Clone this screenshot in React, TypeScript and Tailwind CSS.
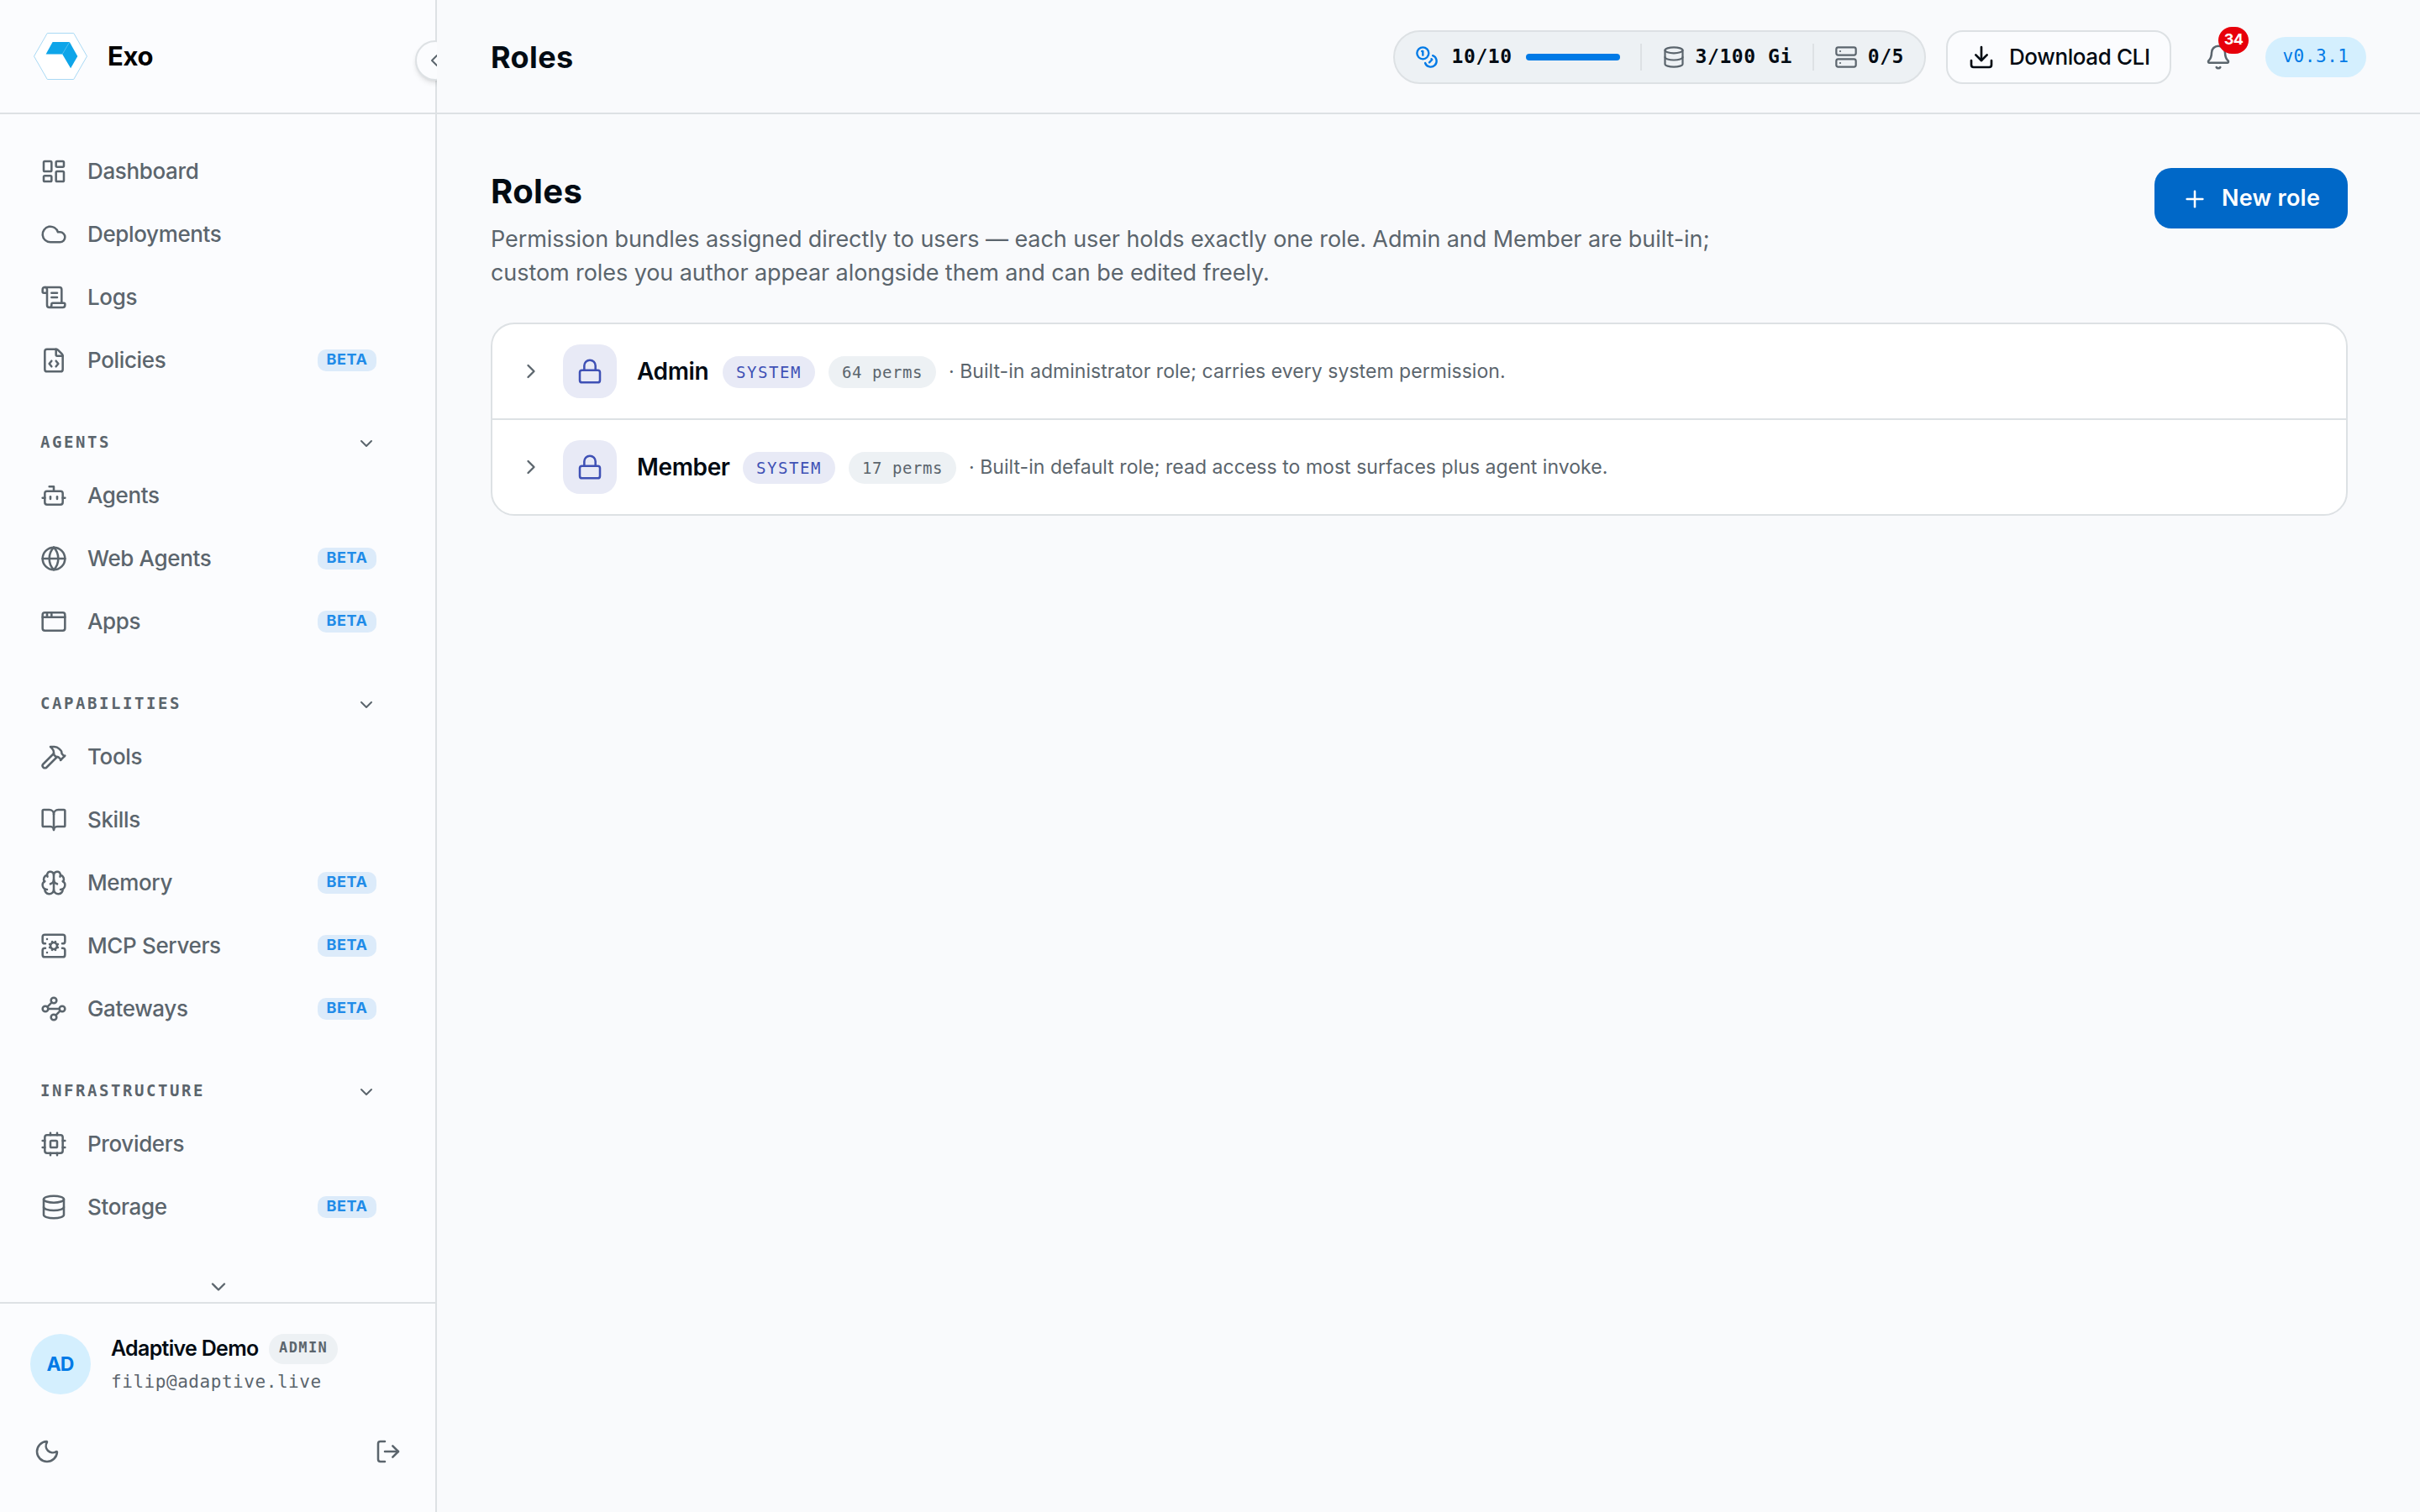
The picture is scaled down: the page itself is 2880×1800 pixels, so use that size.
import { useState } from "react";
import {
  Bell,
  Bot,
  BookOpen,
  Brain,
  ChevronDown,
  ChevronLeft,
  ChevronRight,
  Cloud,
  Coins,
  Database,
  Download,
  FileCode,
  Globe,
  Hammer,
  AppWindow,
  LayoutDashboard,
  Lock,
  LogOut,
  Moon,
  Plus,
  ScrollText,
  Server,
  ServerCog,
  Waypoints,
} from "lucide-react";

type IconProps = { className?: string; strokeWidth?: number };

// Chip with two pins per side
const Chip = ({ className, strokeWidth = 2 }: IconProps) => (
  <svg
    className={className}
    viewBox="0 0 24 24"
    fill="none"
    stroke="currentColor"
    strokeWidth={strokeWidth}
    strokeLinecap="round"
    strokeLinejoin="round"
  >
    <rect x="4" y="4" width="16" height="16" rx="2" />
    <rect x="9" y="9" width="6" height="6" rx="1" />
    <path d="M15 2v2M15 20v2M2 15h2M2 9h2M20 15h2M20 9h2M9 2v2M9 20v2" />
  </svg>
);

const navGroups = [
  {
    label: "",
    items: [
      { name: "Dashboard", icon: LayoutDashboard },
      { name: "Deployments", icon: Cloud },
      { name: "Logs", icon: ScrollText },
      { name: "Policies", icon: FileCode, beta: true },
    ],
  },
  {
    label: "Agents",
    items: [
      { name: "Agents", icon: Bot },
      { name: "Web Agents", icon: Globe, beta: true },
      { name: "Apps", icon: AppWindow, beta: true },
    ],
  },
  {
    label: "Capabilities",
    items: [
      { name: "Tools", icon: Hammer },
      { name: "Skills", icon: BookOpen },
      { name: "Memory", icon: Brain, beta: true },
      { name: "MCP Servers", icon: ServerCog, beta: true },
      { name: "Gateways", icon: Waypoints, beta: true },
    ],
  },
  {
    label: "Infrastructure",
    items: [
      { name: "Providers", icon: Chip },
      { name: "Storage", icon: Database, beta: true },
    ],
  },
];

const roles = [
  {
    name: "Admin",
    perms: 64,
    description: "Built-in administrator role; carries every system permission.",
    nameWidth: "w-[86px]",
  },
  {
    name: "Member",
    perms: 17,
    description:
      "Built-in default role; read access to most surfaces plus agent invoke.",
    nameWidth: "w-[110px]",
  },
];

const Logo = () => (
  <svg className="h-14 w-16" viewBox="0 0 64 56" fill="none">
    <path
      d="M16.3 0.5h31.4L63.5 28 47.7 55.5H16.3L0.5 28z"
      fill="#fff"
      stroke="#a9d9f4"
    />
    <path d="M22.6 11H42.8L34.2 25.4H14.6z" fill="#0ea5e9" />
    <path d="M42.8 11l9.5 17-8.2 14.3-9.9-16.9z" fill="#0ea5e9" />
    <path d="M42.8 11l-8.6 14.4" stroke="#4dbdf0" strokeWidth="0.8" />
  </svg>
);

const Sidebar = () => {
  const [collapsed, setCollapsed] = useState<Record<string, boolean>>({});

  const toggleGroup = (label: string) => {
    setCollapsed((prev) => ({ ...prev, [label]: !prev[label] }));
  };

  return (
    <aside className="relative flex w-[520px] shrink-0 flex-col border-r-2 border-[#dde1e4] bg-[#fbfcfe]">
      <div className="flex h-[136px] shrink-0 items-center gap-6 border-b-2 border-[#dde1e4] pl-10">
        <Logo />
        <span className="text-[31px] font-bold tracking-[-0.3px] text-black">
          Exo
        </span>
      </div>

      {/* Collapse handle */}
      <button className="absolute top-12 -right-6 flex h-12 w-12 items-center justify-center rounded-full border-2 border-[#dde1e4] bg-[#fbfcfe] pr-[2px] shadow-md">
        <ChevronLeft className="h-6 w-6 shrink-0" strokeWidth={2} />
      </button>

      <nav className="flex min-h-0 flex-1 flex-col overflow-hidden px-12 pt-[30px]">
        {navGroups.map((group) => (
          <div key={group.label} className="flex shrink-0 flex-col">
            {group.label && (
              <button
                onClick={() => toggleGroup(group.label)}
                className="flex h-[86px] w-[400px] items-center justify-between pt-[38px]"
              >
                <span className="pb-[3px] font-['DejaVu_Sans_Mono',monospace] text-[19px] font-bold tracking-[2.56px] uppercase">
                  {group.label}
                </span>
                <ChevronDown className="h-6 w-6" />
              </button>
            )}
            {!collapsed[group.label] &&
              group.items.map((item) => (
                <a
                  key={item.name}
                  className="flex h-[75px] w-[400px] items-center gap-6"
                >
                  <item.icon className="h-8 w-8 shrink-0" strokeWidth={1.9} />
                  <span className="flex-1 text-[26px] font-medium tracking-[-0.36px]">
                    {item.name}
                  </span>
                  {item.beta && (
                    <span className="flex h-[26px] w-[70px] items-center justify-center rounded-[10px] bg-[#dcebfa] pb-[2px] text-[18px] font-bold tracking-[0.6px] text-[#208be8]">
                      BETA
                    </span>
                  )}
                </a>
              ))}
          </div>
        ))}
      </nav>

      <div className="flex h-8 shrink-0 justify-center pl-[2px]">
        <ChevronDown className="h-7 w-7" />
      </div>

      {/* Account */}
      <div className="flex h-[250px] shrink-0 flex-col border-t-2 border-[#dde1e4] pt-9">
        <div className="flex items-center gap-6 pl-9">
          <div className="flex h-[72px] w-[72px] items-center justify-center rounded-full bg-[#d4effe] pr-px text-[23px] font-bold tracking-[-1px] text-[#007ae6]">
            AD
          </div>
          <div className="flex flex-col">
            <div className="flex h-9 items-center gap-[14px]">
              <span className="w-[174px] text-[25px] font-semibold tracking-[-0.7px] whitespace-nowrap text-[#020b13]">
                Adaptive Demo
              </span>
              <span className="flex h-9 items-center rounded-full bg-[#edf1f4] px-3 pb-[3px] font-['DejaVu_Sans_Mono',monospace] text-[17px] font-bold tracking-[1.4px]">
                ADMIN
              </span>
            </div>
            <span className="h-9 font-['DejaVu_Sans_Mono',monospace] text-[21px] leading-[43px] tracking-[0.55px]">
              filip@adaptive.live
            </span>
          </div>
        </div>
        <div className="flex items-center justify-between pt-[52px] pr-10 pl-10">
          <Moon className="h-8 w-8" strokeWidth={1.9} />
          <LogOut className="h-8 w-8" strokeWidth={1.9} />
        </div>
      </div>
    </aside>
  );
};

const Topbar = () => (
  <header className="flex h-[136px] shrink-0 items-center justify-between border-b-2 border-[#dde1e4] px-16 pt-px">
    <h1 className="text-[36px] font-bold tracking-[0.4px] text-[#020b13]">
      Roles
    </h1>

    <div className="flex items-center">
      <div className="flex h-16 items-center rounded-full border-2 border-[#dde1e4] bg-[#edf1f4] px-6 font-['DejaVu_Sans_Mono',monospace] text-[23px] font-bold tracking-[0.55px] text-[#020b13]">
        <Coins className="mr-4 h-7 w-7 text-[#007ae6]" />
        <span>10/10</span>
        <div className="ml-4 h-2 w-28 rounded-full bg-[#007ae6]" />
        <div className="mx-6 h-8 w-[2px] bg-[#dde1e4]" />
        <Database className="mr-3 h-7 w-7 text-[#5b656d]" strokeWidth={1.9} />
        <span>3/100 Gi</span>
        <div className="mx-6 h-8 w-[2px] bg-[#dde1e4]" />
        <Server className="mr-3 h-7 w-7 text-[#5b656d]" strokeWidth={1.9} />
        <span>0/5</span>
      </div>

      <button className="ml-6 flex h-16 w-[268px] items-center gap-[17px] rounded-[20px] border-2 border-[#dde1e4] bg-[#fbfcfe] px-6 text-[26px] font-medium tracking-[-0.4px] whitespace-nowrap text-[#020b13]">
        <Download className="h-8 w-8 shrink-0" />
        Download CLI
      </button>

      <button className="relative mx-10 h-8 w-8">
        <Bell className="h-8 w-8" strokeWidth={1.9} />
        <span className="absolute -top-5 left-4 flex h-8 w-9 items-center justify-center rounded-full bg-[#e7000b] pb-[3px] text-[18px] font-bold tracking-[-0.6px] text-white">
          34
        </span>
      </button>

      <span className="flex h-12 w-[120px] items-center justify-center rounded-full bg-[#d4effe] font-['DejaVu_Sans_Mono',monospace] text-[21px] tracking-[0.55px] text-[#007ae6]">
        v0.3.1
      </span>
    </div>
  </header>
);

export default function App() {
  return (
    <div className="flex h-[1800px] w-[2880px] overflow-hidden bg-[#f9fafc] font-['Inter',sans-serif] text-[#5b656d]">
      <Sidebar />

      <div className="relative z-10 flex min-w-0 flex-1 flex-col bg-[#f9fafc]">
        <Topbar />

        <main className="flex-1 pt-16 pr-[86px] pl-16">
          <div className="flex items-start justify-between">
            <div>
              <h2 className="text-[40px] leading-[56px] font-bold tracking-[0.4px] text-[#020b13]">
                Roles
              </h2>
              <p className="mt-[9px] mb-[-1px] w-[1460px] text-[27px] leading-[40px] tracking-[-0.08px] whitespace-nowrap">
                Permission bundles assigned directly to users — each user holds
                exactly one role. Admin and Member are built-in;
                <br />
                custom roles you author appear alongside them and can be edited
                freely.
              </p>
            </div>
            <button className="flex h-[72px] w-[230px] items-center gap-4 rounded-[20px] bg-[#0068c8] px-8 pt-px text-[27px] font-semibold tracking-[0.25px] whitespace-nowrap text-white">
              <Plus className="h-8 w-8 shrink-0" strokeWidth={1.9} />
              New role
            </button>
          </div>

          <div className="mt-10 overflow-hidden rounded-[28px] border-2 border-[#dde1e4] bg-white">
            {roles.map((role) => (
              <div
                key={role.name}
                className="flex h-[114px] items-center border-b-2 border-[#dde1e4] pl-8 last:h-28 last:border-b-0"
              >
                <ChevronRight className="h-7 w-7" />
                <div className="mx-6 flex h-16 w-16 items-center justify-center rounded-[20px] bg-[#e8eaf6]">
                  <Lock className="h-8 w-8 text-[#3f51b5]" strokeWidth={1.9} />
                </div>
                <span
                  className={`${role.nameWidth} text-[28px] font-semibold tracking-[-0.35px] whitespace-nowrap text-[#020b13]`}
                >
                  {role.name}
                </span>
                <span className="mt-[2px] ml-4 flex h-[38px] items-center rounded-full bg-[#e8eaf6] px-4 font-['DejaVu_Sans_Mono',monospace] text-[19px] tracking-[1.56px] text-[#3f51b5]">
                  SYSTEM
                </span>
                <span className="mt-[2px] ml-4 flex h-[38px] items-center rounded-full bg-[#edf1f4] px-4 font-['DejaVu_Sans_Mono',monospace] text-[19px] tracking-[0.56px]">
                  {role.perms} perms
                </span>
                <span className="ml-[15px] pt-px text-[23px] tracking-[0.04px] whitespace-nowrap">
                  · {role.description}
                </span>
              </div>
            ))}
          </div>
        </main>
      </div>
    </div>
  );
}
